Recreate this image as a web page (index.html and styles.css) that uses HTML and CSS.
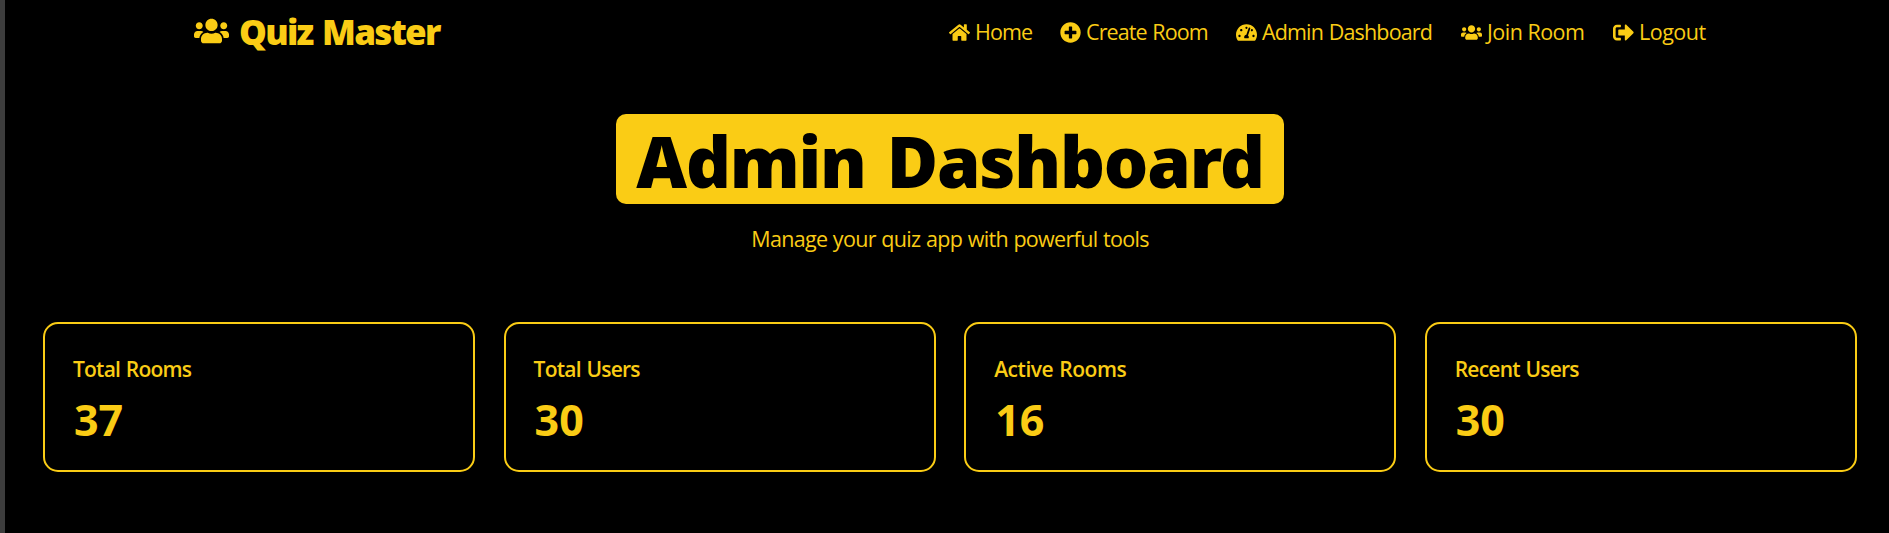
FILE: index.html
```html
<!DOCTYPE html>
<html lang="en">
<head>
<meta charset="utf-8">
<title>Quiz Master</title>
<link rel="stylesheet" href="styles.css">
</head>
<body>
<svg width="0" height="0" class="defs">
<symbol id="users" viewBox="0 0 640 512"><path d="M96 224c35.300 0 64-28.700 64-64s-28.700-64-64-64-64 28.700-64 64 28.700 64 64 64zm448 0c35.300 0 64-28.700 64-64s-28.700-64-64-64-64 28.700-64 64 28.700 64 64 64zm32 32h-64c-17.600 0-33.500 7.100-45.100 18.600 40.300 22.100 68.900 62 75.100 109.400h66c17.700 0 32-14.300 32-32v-32c0-35.300-28.700-64-64-64zm-256 0c61.900 0 112-50.100 112-112S381.900 32 320 32 208 82.100 208 144s50.100 112 112 112zm76.800 32h-8.300c-20.800 10-43.900 16-68.500 16s-47.600-6-68.500-16h-8.300C179.600 288 128 339.600 128 403.200V432c0 26.500 21.500 48 48 48h288c26.500 0 48-21.500 48-48v-28.800c0-63.600-51.600-115.200-115.200-115.200zm-223.700-13.400C161.500 263.100 145.600 256 128 256H64c-35.300 0-64 28.700-64 64v32c0 17.700 14.300 32 32 32h65.900c6.300-47.400 34.900-87.300 75.200-109.400z"/></symbol>
<symbol id="home" viewBox="0 0 576 512"><path d="M280.370 148.260L96 300.110V464a16 16 0 0 0 16 16l112.060-.29a16 16 0 0 0 15.920-16V368a16 16 0 0 1 16-16h64a16 16 0 0 1 16 16v95.640a16 16 0 0 0 16 16.050L464 480a16 16 0 0 0 16-16V300L295.670 148.260a12.190 12.190 0 0 0-15.300 0zM571.600 251.470L488 182.560V44.050a12 12 0 0 0-12-12h-56a12 12 0 0 0-12 12v72.610L318.470 43a48 48 0 0 0-61 0L4.340 251.470a12 12 0 0 0-1.600 16.900l25.500 31A12 12 0 0 0 45.150 301l235.220-193.740a12.190 12.190 0 0 1 15.300 0L530.900 301a12 12 0 0 0 16.900-1.600l25.500-31a12 12 0 0 0-1.700-16.930z"/></symbol>
<symbol id="plus" viewBox="0 0 512 512"><path d="M256 8C119 8 8 119 8 256s111 248 248 248 248-111 248-248S393 8 256 8zm144 276c0 6.600-5.400 12-12 12h-92v92c0 6.600-5.400 12-12 12h-56c-6.600 0-12-5.400-12-12v-92h-92c-6.600 0-12-5.400-12-12v-56c0-6.600 5.400-12 12-12h92v-92c0-6.600 5.400-12 12-12h56c6.600 0 12 5.400 12 12v92h92c6.600 0 12 5.400 12 12v56z"/></symbol>
<symbol id="gauge" viewBox="0 0 576 512"><path d="M288 32C128.940 32 0 160.940 0 320c0 52.800 14.250 102.260 39.060 144.800 5.610 9.620 16.300 15.200 27.440 15.200h443c11.140 0 21.830-5.580 27.440-15.200C561.750 422.260 576 372.800 576 320c0-159.060-128.940-288-288-288zm0 64c14.710 0 26.580 10.130 30.320 23.650-1.110 2.260-2.640 4.230-3.450 6.670l-9.220 27.670c-5.130 3.490-10.970 6.010-17.640 6.010-17.670 0-32-14.330-32-32S270.330 96 288 96zM96 384c-17.670 0-32-14.330-32-32s14.330-32 32-32 32 14.330 32 32-14.330 32-32 32zm48-160c-17.670 0-32-14.330-32-32s14.330-32 32-32 32 14.330 32 32-14.330 32-32 32zm246.770-72.410l-61.330 184C343.130 347.330 352 364.540 352 384c0 11.720-3.380 22.550-8.880 32H232.880c-5.500-9.450-8.880-20.280-8.880-32 0-33.940 26.500-61.430 59.900-63.590l61.340-184.010c4.170-12.560 17.730-19.450 30.360-15.170 12.570 4.190 19.350 17.790 15.170 30.360zm14.660 57.200l15.520-46.550c3.470-1.290 7.130-2.230 11.050-2.230 17.670 0 32 14.330 32 32s-14.330 32-32 32c-11.380-.010-20.890-6.280-26.570-15.220zM480 384c-17.670 0-32-14.330-32-32s14.330-32 32-32 32 14.330 32 32-14.330 32-32 32z"/></symbol>
<symbol id="logout" viewBox="0 0 512 512"><path d="M497 273L329 441c-15 15-41 4.500-41-17v-96H152c-13.300 0-24-10.700-24-24v-96c0-13.300 10.700-24 24-24h136V88c0-21.400 25.900-32 41-17l168 168c9.300 9.400 9.300 24.600 0 34zM192 436v-40c0-6.600-5.400-12-12-12H96c-17.700 0-32-14.300-32-32V160c0-17.700 14.300-32 32-32h84c6.600 0 12-5.400 12-12V76c0-6.600-5.400-12-12-12H96c-53 0-96 43-96 96v192c0 53 43 96 96 96h84c6.600 0 12-5.400 12-12z"/></symbol>
</svg>
<div class="page">
  <header class="navbar">
    <a class="brand"><svg class="brand-icon"><use href="#users"/></svg><span class="brand-name">Quiz Master</span></a>
    <nav class="links">
      <a class="link"><svg class="icon"><use href="#home"/></svg><span class="t-home">Home</span></a>
      <a class="link"><svg class="icon"><use href="#plus"/></svg><span class="t-create">Create Room</span></a>
      <a class="link"><svg class="icon"><use href="#gauge"/></svg><span class="t-admin">Admin Dashboard</span></a>
      <a class="link"><svg class="icon"><use href="#users"/></svg><span class="t-join">Join Room</span></a>
      <a class="link"><svg class="icon"><use href="#logout"/></svg><span class="t-logout">Logout</span></a>
    </nav>
  </header>
  <main class="main">
    <h1 class="title">Admin Dashboard</h1>
    <p class="subtitle">Manage your quiz app with powerful tools</p>
    <section class="cards">
      <article class="card"><h2 class="label">Total Rooms</h2><p class="value">37</p></article>
      <article class="card"><h2 class="label">Total Users</h2><p class="value">30</p></article>
      <article class="card"><h2 class="label label-active">Active Rooms</h2><p class="value">16</p></article>
      <article class="card"><h2 class="label">Recent Users</h2><p class="value">30</p></article>
    </section>
  </main>
</div>
</body>
</html>
```
FILE: styles.css
```css
* { box-sizing: border-box; margin: 0; }
body {
  height: 533px;
  overflow: hidden;
  background: #000;
  color: #facc15;
  font-family: "Open Sans", "Noto Sans", sans-serif;
}
svg { fill: currentColor; display: block; flex: none; }
.defs { position: absolute; }
.page { height: 533px; border-left: 5px solid #3d3d3d; }
.navbar { height: 64px; display: flex; padding-left: 189px; white-space: nowrap; }
.brand { display: flex; width: 755px; align-items: center; gap: 10px; }
.brand-icon { width: 35px; height: 28px; margin-top: -3px; }
.brand-name { font-family: "Noto Sans", sans-serif; font-size: 35px; font-weight: 900; line-height: 64px; letter-spacing: -1.700px; word-spacing: 2px; }
.links { display: grid; grid-template-columns: 111px 176px 225px 152px 100px; }
.link { display: flex; align-items: center; gap: 5px; font-size: 21.500px; line-height: 64px; }
.t-home, .t-create { letter-spacing: -0.900px; word-spacing: 1px; }
.t-admin { letter-spacing: -0.850px; word-spacing: 1px; }
.t-join, .t-logout { letter-spacing: -0.500px; }
.icon { width: 21px; height: 21px; }
.main { display: flex; flex-direction: column; align-items: center; padding: 50px 32px 0 38px; }
.title {
  width: 668px; height: 90px; border-radius: 10px;
  background: #facc15; color: #000;
  font-family: "Noto Sans", sans-serif;
  font-size: 70px; font-weight: 900; line-height: 94px; letter-spacing: -1.200px; word-spacing: 4px;
  text-align: center; white-space: nowrap;
}
.subtitle { margin-top: 17px; font-size: 21.500px; line-height: 35px; letter-spacing: -0.680px; word-spacing: 0.600px; }
.cards { width: 100%; margin-top: 66px; display: grid; grid-template-columns: repeat(4, 1fr); gap: 28.330px; }
.card { height: 150px; border: 2px solid #facc15; border-radius: 15px; padding: 28px; }
.label { font-size: 21px; font-weight: 600; line-height: 34px; letter-spacing: -0.780px; word-spacing: 1px; }
.label-active { letter-spacing: -0.450px; }
.value { font-size: 43px; font-weight: 700; line-height: 50px; margin: 9px 0 0 1px; }
```
